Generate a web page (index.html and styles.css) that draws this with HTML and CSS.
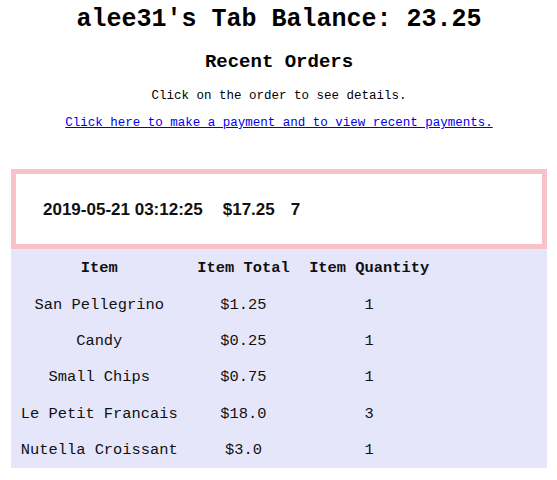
FILE: index.html
```html
<!DOCTYPE html>
<html>
<head>
<meta charset="utf-8">
<title>Tab Balance</title>
<link rel="stylesheet" href="styles.css">
</head>
<body>
<h1 class="title">alee31's Tab Balance: 23.25</h1>
<h2 class="subtitle">Recent Orders</h2>
<p class="hint">Click on the order to see details.</p>
<p class="pay"><a href="#">Click here to make a payment and to view recent payments.</a></p>

<div class="order">
  <span class="date">2019-05-21 03:12:25</span>
  <span class="total">$17.25</span>
  <span class="count">7</span>
</div>
<div class="details">
  <table class="items">
    <thead>
      <tr><th>Item</th><th>Item Total</th><th>Item Quantity</th></tr>
    </thead>
    <tbody>
      <tr><td>San Pellegrino</td><td>$1.25</td><td>1</td></tr>
      <tr><td>Candy</td><td>$0.25</td><td>1</td></tr>
      <tr><td>Small Chips</td><td>$0.75</td><td>1</td></tr>
      <tr><td>Le Petit Francais</td><td>$18.0</td><td>3</td></tr>
      <tr><td>Nutella Croissant</td><td>$3.0</td><td>1</td></tr>
    </tbody>
  </table>
</div>
</body>
</html>
```
FILE: styles.css
```css
html, body {
  background: #ffffff;
}
body {
  margin: 0 10px 0 11px;
  font-family: "Liberation Mono", "Courier New", monospace;
  color: #000;
}
.title {
  font-size: 25px;
  line-height: 28px;
  font-weight: bold;
  text-align: center;
  margin: 6px 0 0;
}
.subtitle {
  font-size: 19px;
  line-height: 22px;
  font-weight: bold;
  text-align: center;
  margin: 17px 0 0;
}
.hint {
  font-size: 12.5px;
  line-height: 15px;
  text-align: center;
  margin: 16px 0 0;
}
.pay {
  font-size: 12.5px;
  line-height: 15px;
  text-align: center;
  margin: 12px 0 0;
}
.pay a {
  color: #0000ee;
}
.order {
  margin-top: 38px;
  height: 68px;
  box-sizing: content-box;
  border: 5px solid #f8c2ca;
  display: flex;
  align-items: center;
  padding: 2px 0 0 27px;
  font-family: "Liberation Sans", Arial, sans-serif;
  font-weight: bold;
  font-size: 17px;
  color: #111;
}
.order .date {
  margin-right: 20px;
}
.order .total {
  margin-right: 16px;
}
.details {
  background: #e6e6fa;
  height: 219px;
  box-sizing: border-box;
  padding-top: 1px;
}
.items {
  border-collapse: collapse;
  font-size: 15.4px;
  color: #111;
}
.items tr {
  height: 36.4px;
}
.items th,
.items td {
  padding: 0 9.75px;
  text-align: center;
  vertical-align: middle;
  white-space: nowrap;
}
.items th {
  font-weight: bold;
}
```
